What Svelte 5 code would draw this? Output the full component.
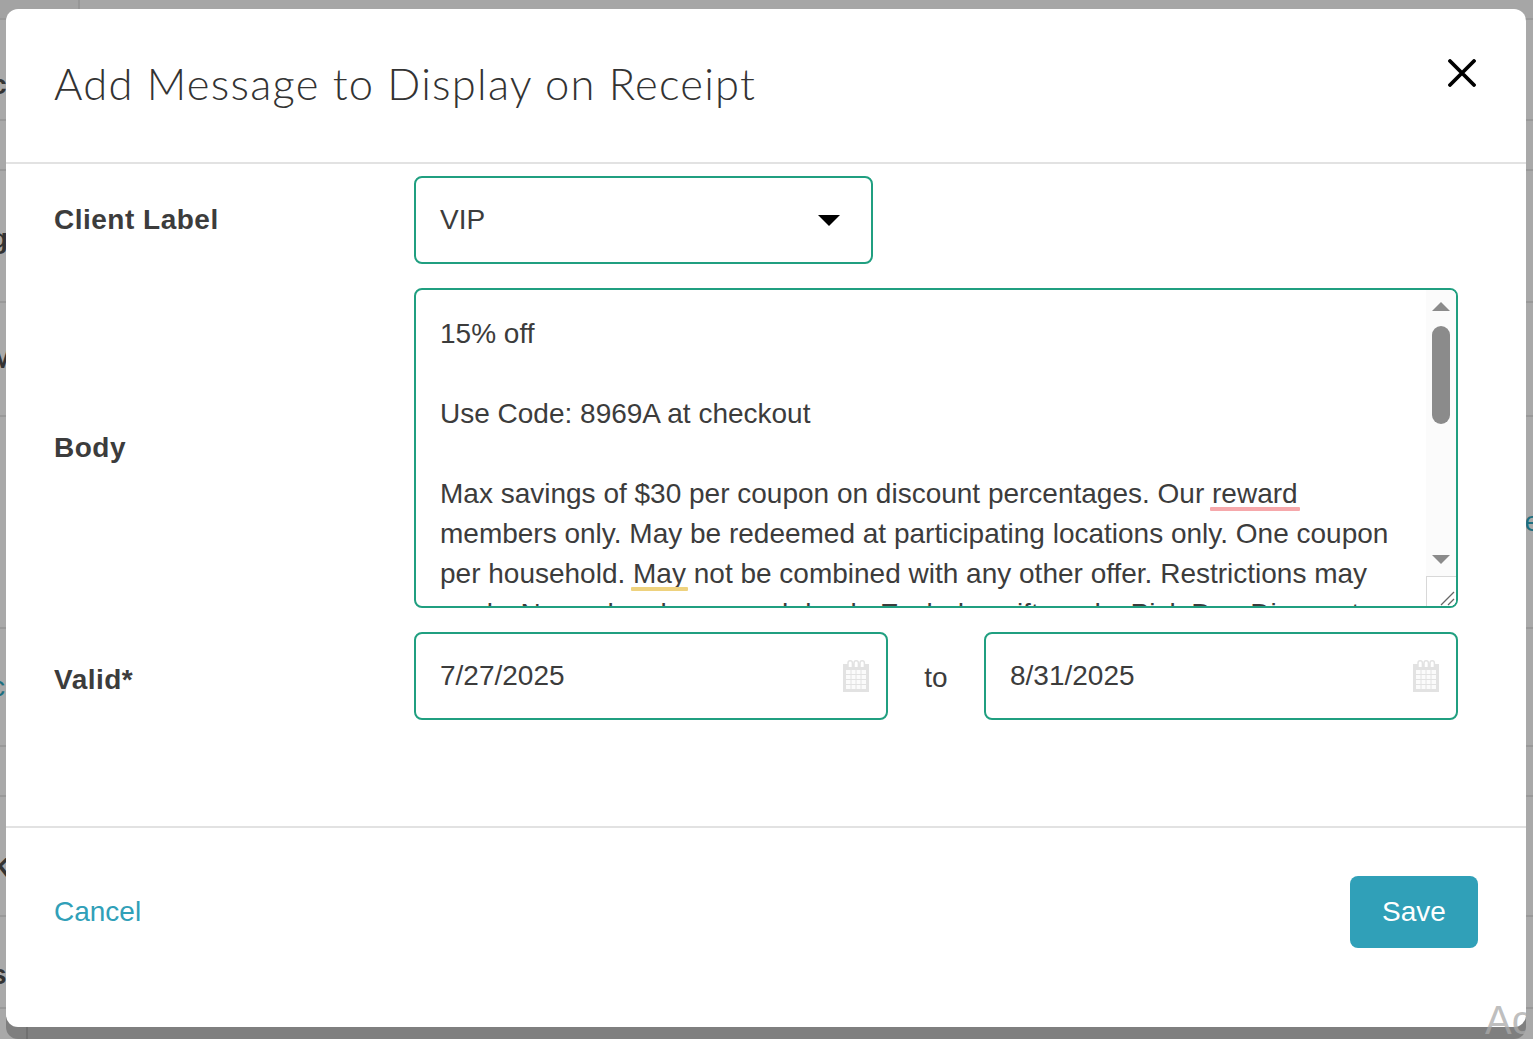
<script lang="ts">
  let clientLabel = 'VIP';
  let validFrom = '7/27/2025';
  let validTo = '8/31/2025';

  // rows behind the overlay, only their edges peek out beside the modal
  const backdropRows = [
    { height: 20, pad: 0, left: '', right: '', teal: false },
    { height: 101, pad: 30, left: 'c', right: '', teal: false },
    { height: 50, pad: 0, left: '', right: '', teal: false },
    { height: 132, pad: 6, left: 'g', right: '', teal: false },
    { height: 114, pad: 0, left: 'M', right: '', teal: false },
    { height: 212, pad: 0, left: '', right: 'e', teal: false },
    { height: 118, pad: 0, left: 'c', right: '', teal: true },
    { height: 50, pad: 0, left: '', right: '', teal: false },
    { height: 120, pad: 24, left: 'K', right: '', teal: false },
    { height: 92, pad: 26, left: 's', right: '', teal: false }
  ];
</script>

{#snippet calendar()}
  <svg class="cal" viewBox="0 0 26 32" width="26" height="32" aria-hidden="true">
    <path d="M0 4h26v28H0z" fill="#e2e2e2" />
    <path d="M3 10h20v19H3z" fill="#fbfbfb" />
    <path d="M3 14.500h20M3 19.500h20M3 24.500h20M8 10v19M13 10v19M18 10v19" stroke="#e2e2e2" stroke-width="1" fill="none" />
    <path d="M5 7V3a2.200 2.200 0 0 1 4.400 0v4M11 7V3a2.200 2.200 0 0 1 4.400 0v4M17 7V3a2.200 2.200 0 0 1 4.400 0v4" stroke="#e2e2e2" stroke-width="1.500" fill="#fff" />
  </svg>
{/snippet}

<div class="page">
  <div class="backdrop">
    {#each backdropRows as row, i}
      <div class="bg-row" class:first={i === 0} style="height: {row.height}px; padding-top: {row.pad}px">
        <span class="bg-char" class:teal={row.teal}>{row.left}</span>
        <span class="bg-char right">{row.right}</span>
      </div>
    {/each}
  </div>

  <div class="modal">
    <header class="modal-header">
      <h1>Add Message to Display on Receipt</h1>
      <button class="close" aria-label="Close">
        <svg viewBox="0 0 28 28" width="28" height="28">
          <path d="M2 2l24 24M26 2L2 26" stroke="#000" stroke-width="3.800" stroke-linecap="round" fill="none" />
        </svg>
      </button>
    </header>

    <div class="modal-body">
      <div class="form-row">
        <span class="label">Client Label</span>
        <div class="field select">
          <span>{clientLabel}</span>
          <span class="caret"></span>
        </div>
      </div>

      <div class="form-row">
        <span class="label">Body</span>
        <div class="field textarea">
          <div class="text">
            <p>15% off</p>
            <p>&nbsp;</p>
            <p>Use Code: 8969A at checkout</p>
            <p>&nbsp;</p>
            <p>Max savings of $30 per coupon on discount percentages. Our <span class="mark spell">reward</span></p>
            <p>members only. May be redeemed at participating locations only. One coupon</p>
            <p>per household. <span class="mark grammar">May</span> not be combined with any other offer. Restrictions may</p>
            <p>apply. No cash value or cash back. Excludes gift cards, Pick Dep Discount</p>
          </div>
          <div class="scrollbar">
            <span class="arrow up"></span>
            <span class="thumb"></span>
            <span class="arrow down"></span>
            <span class="resizer">
              <svg viewBox="0 0 16 16" width="16" height="16">
                <path d="M1 15L14 2M8 15l6-6" stroke="#666" stroke-width="1.300" fill="none" />
              </svg>
            </span>
          </div>
        </div>
      </div>

      <div class="form-row">
        <span class="label valid">Valid*</span>
        <div class="dates">
          <div class="field date">
            <span>{validFrom}</span>
            {@render calendar()}
          </div>
          <span class="to">to</span>
          <div class="field date">
            <span>{validTo}</span>
            {@render calendar()}
          </div>
        </div>
      </div>
    </div>

    <footer class="modal-footer">
      <a class="cancel" href="#cancel">Cancel</a>
      <button class="save">Save</button>
    </footer>
  </div>

  <div class="watermark"><span>Ac</span></div>
</div>

<style>
  :global(body) {
    margin: 0;
    font-family: "Liberation Sans", Arial, sans-serif;
  }

  .page {
    position: relative;
    width: 1533px;
    height: 1039px;
    overflow: hidden;
    background: #a9a9a9;
  }

  /* column rule of the page behind, shows below the modal */
  .page::after {
    content: "";
    position: absolute;
    left: 26px;
    top: 1027px;
    width: 2px;
    height: 12px;
    background: #707070;
  }

  /* Page behind the overlay */
  .backdrop {
    position: absolute;
    inset: 0;
    display: flex;
    flex-direction: column;
  }

  .bg-row {
    box-sizing: border-box;
    flex: none;
    display: flex;
    justify-content: space-between;
    align-items: center;
    border-bottom: 2px solid #999;
    font-size: 28px;
    color: #333;
    overflow: hidden;
  }

  .bg-row.first {
    background: linear-gradient(to right, #a3a3a3 78px, #979797 78px, #979797 80px, #a6a6a6 80px);
  }

  .bg-char {
    margin-left: -9px;
    font-weight: 700;
  }

  .bg-char.teal {
    font-weight: 400;
    color: #1d6f80;
  }

  .bg-char.right {
    margin: 0 -7px 0 0;
    font-weight: 400;
    color: #1d6f80;
  }

  .modal {
    position: absolute;
    left: 6px;
    top: 9px;
    width: 1520px;
    height: 1018px;
    box-sizing: border-box;
    display: flex;
    flex-direction: column;
    background: #fff;
    border-radius: 12px;
    overflow: hidden;
    box-shadow: 0 12px 0 #7f7f7f;
    color: #3c3c3c;
  }

  /* Header */
  .modal-header {
    flex: none;
    box-sizing: border-box;
    height: 155px;
    display: flex;
    justify-content: space-between;
    align-items: flex-start;
    padding: 48px 50px 0 48px;
    border-bottom: 2px solid #e2e2e2;
  }

  h1 {
    margin: 0;
    font-family: Lato, sans-serif;
    font-size: 43.500px;
    font-weight: 300;
    line-height: 52px;
    letter-spacing: 1.250px;
    color: #333;
  }

  .close {
    margin: 2px 0 0;
    padding: 0;
    border: none;
    background: none;
    width: 28px;
    height: 28px;
    display: block;
  }

  /* Form */
  .modal-body {
    flex: none;
    box-sizing: border-box;
    height: 664px;
    padding: 12px 68px 0 48px;
    display: flex;
    flex-direction: column;
    gap: 24px;
    border-bottom: 2px solid #e2e2e2;
  }

  .form-row {
    display: flex;
    align-items: center;
  }

  .label {
    flex: none;
    width: 360px;
    font-size: 28px;
    font-weight: 700;
    letter-spacing: 0.5px;
  }

  .label.valid {
    margin-top: 8px;
  }

  .field {
    box-sizing: border-box;
    border: 2px solid #209f80;
    border-radius: 8px;
    font-size: 28px;
    background: #fff;
  }

  .select {
    width: 459px;
    height: 88px;
    display: flex;
    align-items: center;
    justify-content: space-between;
    padding: 0 31px 0 24px;
  }

  .caret {
    width: 0;
    height: 0;
    border-left: 11px solid transparent;
    border-right: 11px solid transparent;
    border-top: 11px solid #000;
  }

  .textarea {
    width: 1044px;
    height: 320px;
    display: flex;
    overflow: hidden;
    position: relative;
  }

  .text {
    flex: 1;
    padding: 24px 0 0 24px;
    line-height: 40px;
    white-space: nowrap;
    overflow: hidden;
  }

  .text p {
    margin: 0;
  }

  .mark {
    position: relative;
  }

  .mark::after {
    content: "";
    position: absolute;
    left: -2px;
    right: -2px;
    bottom: -2px;
    height: 4px;
    border-radius: 1px;
  }

  .spell::after {
    background: #f6a8ab;
  }

  .grammar::after {
    background: #eed27e;
  }

  .scrollbar {
    flex: none;
    width: 30px;
    position: relative;
    display: flex;
    flex-direction: column;
    align-items: center;
    background: #fbfbfb;
  }

  .arrow {
    width: 0;
    height: 0;
    border-left: 9px solid transparent;
    border-right: 9px solid transparent;
  }

  .arrow.up {
    margin-top: 12px;
    border-bottom: 9px solid #8b8b8b;
  }

  .arrow.down {
    margin-top: 131px;
    border-top: 9px solid #8b8b8b;
  }

  .thumb {
    margin-top: 15px;
    width: 18px;
    height: 98px;
    border-radius: 9px;
    background: #8b8b8b;
  }

  .resizer {
    position: absolute;
    right: 0;
    bottom: 0;
    width: 30px;
    height: 30px;
    box-sizing: border-box;
    border: 1px solid #d8d8d8;
    border-width: 1px 0 0 1px;
    background: #fff;
    display: flex;
    align-items: flex-end;
    justify-content: flex-end;
  }

  .dates {
    display: flex;
    align-items: center;
    width: 1044px;
  }

  .date {
    flex: none;
    width: 474px;
    height: 88px;
    display: flex;
    align-items: center;
    justify-content: space-between;
    padding: 0 17px 0 24px;
  }

  .cal {
    flex: none;
    margin-top: 2px;
    margin-bottom: 2px;
  }

  .to {
    flex: 1;
    margin-top: 4px;
    text-align: center;
    font-size: 28px;
  }

  /* Footer */
  .modal-footer {
    flex: 1;
    display: flex;
    align-items: flex-start;
    justify-content: space-between;
    padding: 48px 48px 0;
  }

  .cancel {
    margin-top: 20px;
    font-size: 28px;
    color: #30a0b8;
    text-decoration: none;
  }

  .save {
    width: 128px;
    height: 72px;
    border: none;
    border-radius: 8px;
    background: #30a0b8;
    color: #fff;
    font-family: inherit;
    font-size: 28px;
  }

  /* Windows-style watermark, sits over modal and shadow, cut at the modal's right edge */
  .watermark {
    position: absolute;
    left: 1485px;
    top: 998px;
    width: 41px;
    height: 41px;
    overflow: hidden;
    font-size: 40px;
    line-height: 44px;
    color: rgba(170, 170, 170, 0.75);
  }
</style>
